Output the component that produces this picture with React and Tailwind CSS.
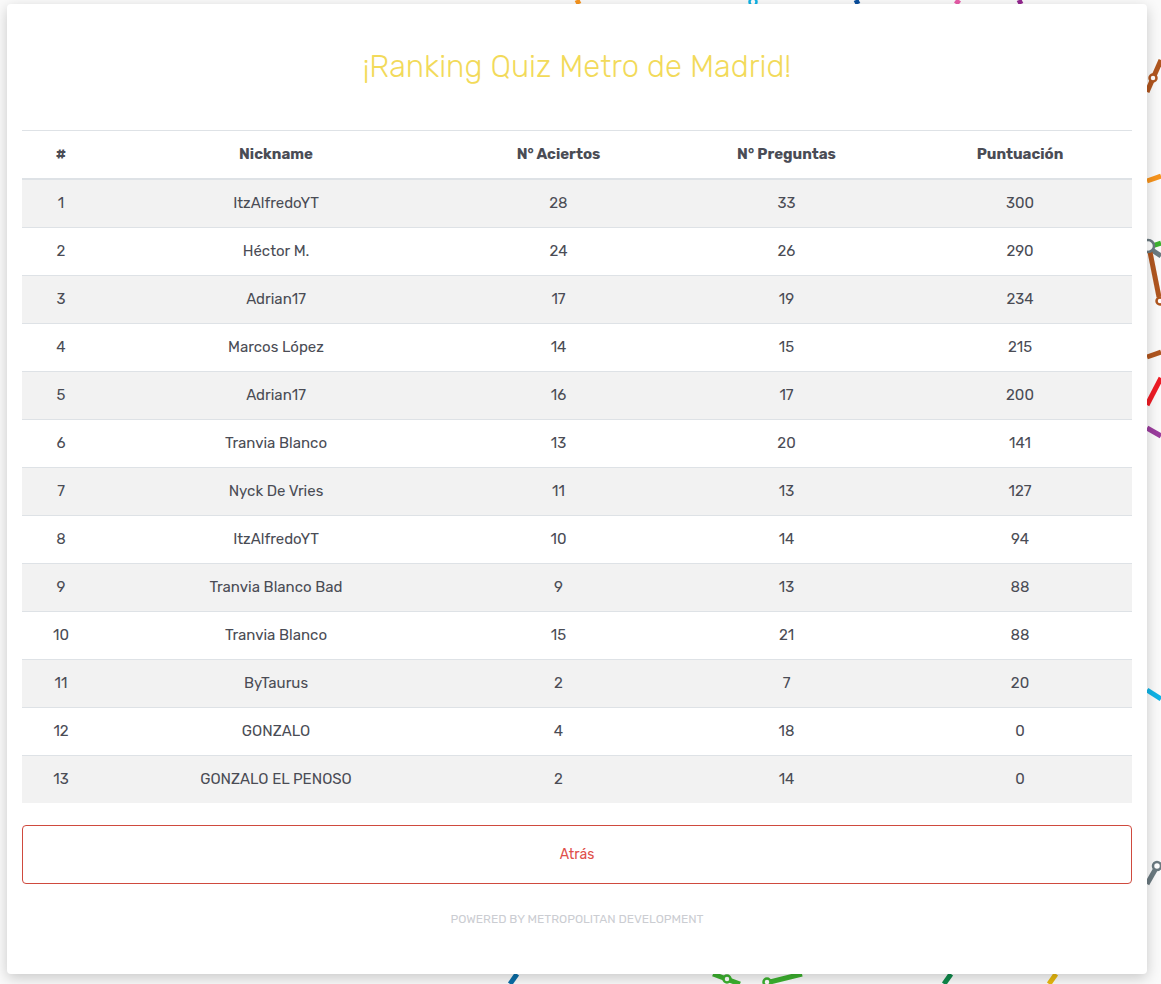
const rows = [
  [1, 'ItzAlfredoYT', 28, 33, 300],
  [2, 'Héctor M.', 24, 26, 290],
  [3, 'Adrian17', 17, 19, 234],
  [4, 'Marcos López', 14, 15, 215],
  [5, 'Adrian17', 16, 17, 200],
  [6, 'Tranvia Blanco', 13, 20, 141],
  [7, 'Nyck De Vries', 11, 13, 127],
  [8, 'ItzAlfredoYT', 10, 14, 94],
  [9, 'Tranvia Blanco Bad', 9, 13, 88],
  [10, 'Tranvia Blanco', 15, 21, 88],
  [11, 'ByTaurus', 2, 7, 20],
  [12, 'GONZALO', 4, 18, 0],
  [13, 'GONZALO EL PENOSO', 2, 14, 0],
]

// Metro map lines peeking out around the card
function MetroMap() {
  const lines = [
    ['#f7941d', 'M1147 181 L1161 176'],
    ['#b0561f', 'M1147 92 L1161 60'],
    ['#3cb22f', 'M1152 246 L1161 243'],
    ['#6b7a80', 'M1152 250 L1161 256'],
    ['#b0561f', 'M1150 252 L1159 297'],
    ['#b0561f', 'M1147 357 L1161 352'],
    ['#ee1c25', 'M1147 405 L1161 378'],
    ['#9b3d9e', 'M1147 428 L1161 436'],
    ['#10b3e6', 'M1147 690 L1161 699'],
    ['#6b7a80', 'M1147 884 L1155 870'],
    ['#f7941d', 'M577 0 L579 4'],
    ['#0a4f9e', 'M856 0 L858 4'],
    ['#e85ca8', 'M959 0 L956 4'],
    ['#93278f', 'M1019 0 L1021 4'],
    ['#0a6ea8', 'M517 974 L510 984'],
    ['#3cb22f', 'M713 974 L740 984'],
    ['#3cb22f', 'M770 982 L802 974'],
    ['#0f8a4b', 'M951 974 L944 984'],
    ['#e8b90f', 'M1056 974 L1049 984'],
  ]
  const stops = [
    ['#b0561f', 1153, 78, 3.5],
    ['#6b7a80', 1148, 246, 6],
    ['#b0561f', 1160, 301, 3.5],
    ['#6b7a80', 1157, 866, 4],
    ['#3cb22f', 727, 979, 3.5],
    ['#3cb22f', 767, 982, 3.5],
    ['#10b3e6', 753, 2, 3.5],
  ]
  return (
    <svg className="absolute inset-0 w-full h-full" viewBox="0 0 1161 984" fill="none">
      {lines.map(([c, d]) => <path key={d} d={d} stroke={c} strokeWidth="5" />)}
      {stops.map(([c, x, y, r]) => <circle key={x + '-' + y} cx={x} cy={y} r={r} fill="#fff" stroke={c} strokeWidth="2.5" />)}
    </svg>
  )
}

export default function App() {
  return (
    <div className="relative h-[984px] overflow-hidden bg-[#fafafa] pt-[4px] pl-[7px] font-['Rubik','Inter','Noto_Sans',sans-serif] text-[#4a4c55]">
      <MetroMap />
      <div className="relative w-[1140px] h-[970px] rounded-[4px] bg-white px-[15px] shadow-[0_4px_14px_rgba(0,0,0,0.2)]">
        <h1 className="pt-[44px] pb-[44px] text-center text-[31px] leading-[38px] font-light text-[#f2da5a]">¡Ranking Quiz Metro de Madrid!</h1>

        <table className="w-[1110px] table-fixed border-collapse text-center text-[15px]">
          <colgroup>
            <col className="w-[78px]" />
            <col className="w-[352px]" />
            <col className="w-[213px]" />
            <col className="w-[243px]" />
            <col className="w-[224px]" />
          </colgroup>
          <thead>
            <tr className="h-[48px] border-t border-b-2 border-[#dee2e6]">
              <th className="font-bold">#</th>
              <th className="font-bold">Nickname</th>
              <th className="font-bold">N° Aciertos</th>
              <th className="font-bold">N° Preguntas</th>
              <th className="font-bold">Puntuación</th>
            </tr>
          </thead>
          <tbody>
            {rows.map((r, i) => (
              <tr key={r[0]} className={`${i === 0 ? 'h-[49px]' : i === 12 ? 'h-[47px] border-t border-[#dee2e6]' : 'h-[48px] border-t border-[#dee2e6]'} ${i % 2 === 0 ? 'bg-[#f2f2f2]' : ''}`}>
                {r.map((v, j) => <td key={j}>{v}</td>)}
              </tr>
            ))}
          </tbody>
        </table>

        <button className="mt-[22px] block h-[59px] w-[1110px] rounded-[4px] border border-[#cf4a3e] text-[14px] text-[#e0504a]">Atrás</button>
        <p className="mt-[27px] text-center text-[12px] leading-[16px] uppercase text-[#cbcdd2]">Powered by Metropolitan Development</p>
      </div>
    </div>
  )
}
